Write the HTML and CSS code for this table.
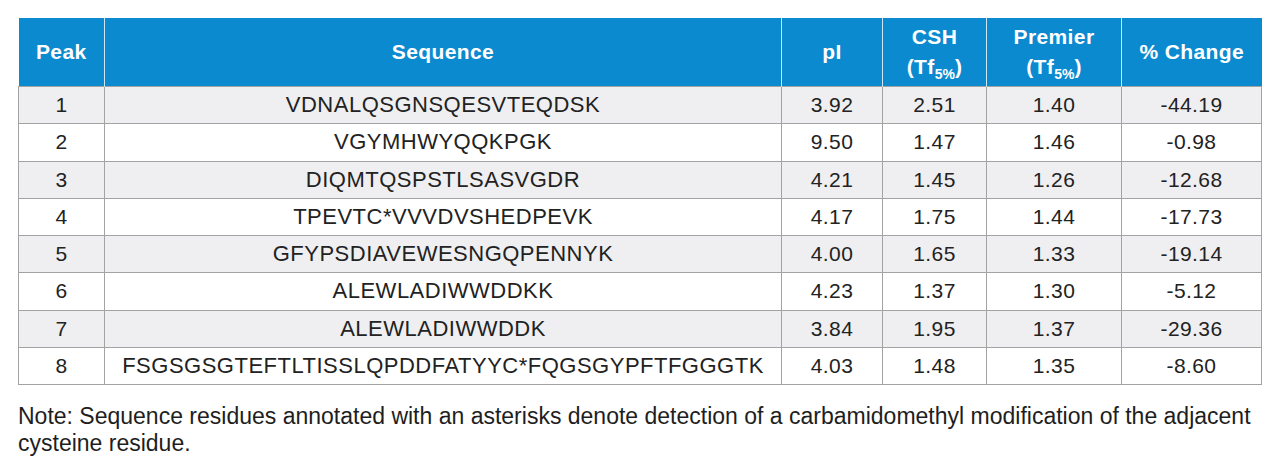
FILE: index.html
```html
<!DOCTYPE html>
<html>
<head>
<meta charset="utf-8">
<link rel="stylesheet" href="styles.css">
</head>
<body>
<div class="page">
  <table class="data">
    <colgroup>
      <col class="c-peak">
      <col class="c-seq">
      <col class="c-pi">
      <col class="c-csh">
      <col class="c-prem">
      <col class="c-chg">
    </colgroup>
    <thead>
      <tr>
        <th>Peak</th>
        <th>Sequence</th>
        <th>pI</th>
        <th>CSH<br>(Tf<sub>5%</sub>)</th>
        <th>Premier<br>(Tf<sub>5%</sub>)</th>
        <th>% Change</th>
      </tr>
    </thead>
    <tbody>
      <tr><td>1</td><td class="seq">VDNALQSGNSQESVTEQDSK</td><td>3.92</td><td>2.51</td><td>1.40</td><td>-44.19</td></tr>
      <tr><td>2</td><td class="seq">VGYMHWYQQKPGK</td><td>9.50</td><td>1.47</td><td>1.46</td><td>-0.98</td></tr>
      <tr><td>3</td><td class="seq">DIQMTQSPSTLSASVGDR</td><td>4.21</td><td>1.45</td><td>1.26</td><td>-12.68</td></tr>
      <tr><td>4</td><td class="seq">TPEVTC*VVVDVSHEDPEVK</td><td>4.17</td><td>1.75</td><td>1.44</td><td>-17.73</td></tr>
      <tr><td>5</td><td class="seq">GFYPSDIAVEWESNGQPENNYK</td><td>4.00</td><td>1.65</td><td>1.33</td><td>-19.14</td></tr>
      <tr><td>6</td><td class="seq">ALEWLADIWWDDKK</td><td>4.23</td><td>1.37</td><td>1.30</td><td>-5.12</td></tr>
      <tr><td>7</td><td class="seq">ALEWLADIWWDDK</td><td>3.84</td><td>1.95</td><td>1.37</td><td>-29.36</td></tr>
      <tr><td>8</td><td class="seq">FSGSGSGTEFTLTISSLQPDDFATYYC*FQGSGYPFTFGGGTK</td><td>4.03</td><td>1.48</td><td>1.35</td><td>-8.60</td></tr>
    </tbody>
  </table>
  <p class="note">Note: Sequence residues annotated with an asterisks denote detection of a carbamidomethyl modification of the adjacent cysteine residue.</p>
</div>
</body>
</html>
```

FILE: styles.css
```css
html, body {
  margin: 0;
  padding: 0;
  background: #ffffff;
}

.page {
  padding: 18px 0 0 18px;
  width: 1243px;
  font-family: "Liberation Sans", Arial, sans-serif;
  color: #222222;
}

.data {
  border-collapse: collapse;
  table-layout: fixed;
  width: 1243px;
}

.c-peak { width: 86px; }
.c-seq { width: 677px; }
.c-pi { width: 101px; }
.c-csh { width: 104px; }
.c-prem { width: 135px; }
.c-chg { width: 140px; }

.data th {
  background: #0b8ad0;
  color: #ffffff;
  font-weight: 700;
  font-size: 21px;
  line-height: 30px;
  height: 68px;
  padding: 0;
  text-align: center;
  vertical-align: middle;
  letter-spacing: 0.4px;
  border-left: 1px solid #cde6f6;
  border-right: 1px solid #cde6f6;
}

.data th:first-child { border-left: none; }
.data th:last-child { border-right: none; }

.data th sub {
  font-size: 14px;
  line-height: 0;
  vertical-align: -5px;
  letter-spacing: 0;
}

.data td {
  height: 36.25px;
  padding: 0;
  border: 1px solid #a3a3a3;
  text-align: center;
  vertical-align: middle;
  font-size: 21px;
  letter-spacing: 0.4px;
}

.data tbody tr:nth-child(odd) td {
  background: #efeff1;
}

.data td.seq {
  font-size: 22px;
  letter-spacing: 0.5px;
}

.note {
  margin: 18px 0 0 0;
  font-size: 23px;
  line-height: 27px;
  color: #1e1e1e;
}
```
